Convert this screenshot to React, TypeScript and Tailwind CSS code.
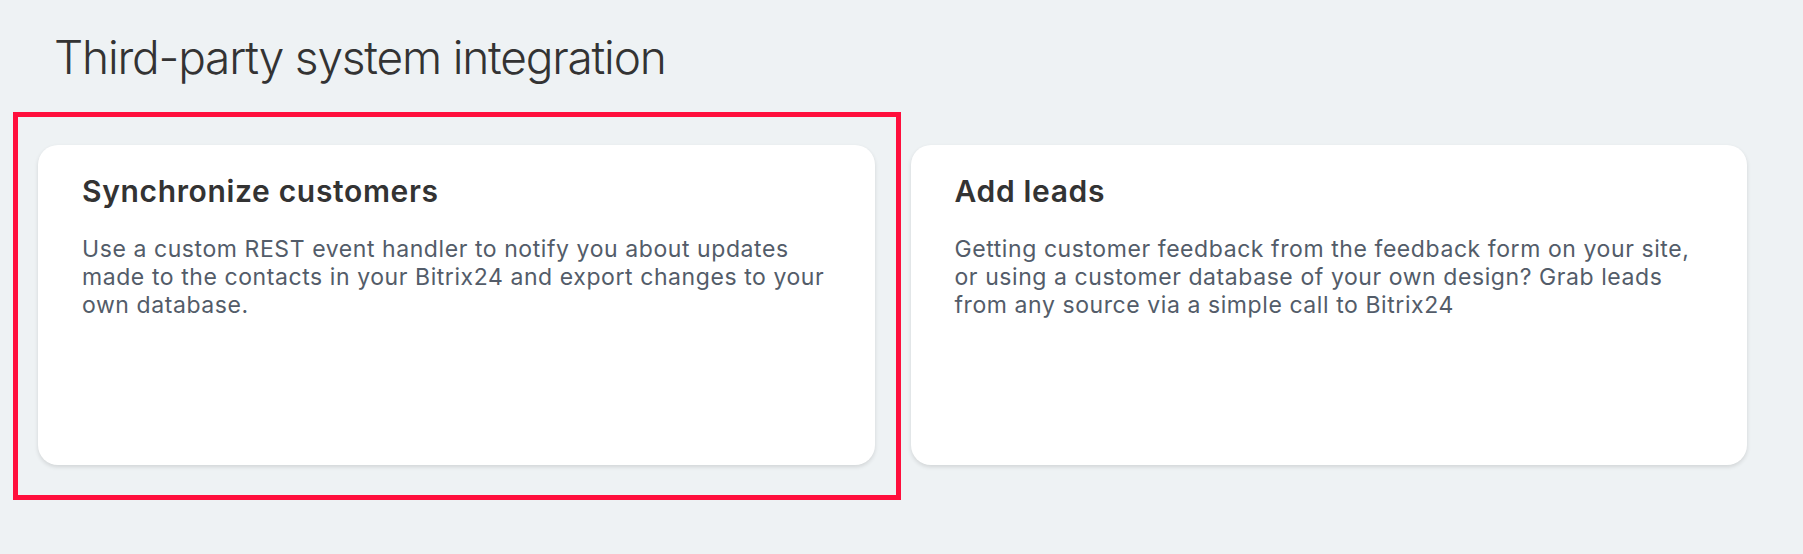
export default function App() {
  const cards = [
    {
      title: "Synchronize customers",
      text: "Use a custom REST event handler to notify you about updates made to the contacts in your Bitrix24 and export changes to your own database.",
      marked: true,
    },
    {
      title: "Add leads",
      text: "Getting customer feedback from the feedback form on your site, or using a customer database of your own design? Grab leads from any source via a simple call to Bitrix24",
      marked: false,
    },
  ]

  return (
    <div className="min-h-screen w-full bg-[#eef2f4] font-['Inter','Liberation_Sans',sans-serif]">
      <h1 className="pl-[54px] pt-[34px] text-[46px] font-light leading-none tracking-[-0.026em] text-[#333]">
        Third-party system integration
      </h1>

      <div className="mt-[65px] grid grid-cols-2 gap-[36px] pl-[38px] pr-[56px]">
        {cards.map((card) => (
          <div key={card.title} className="relative">
            {/* annotation frame */}
            {card.marked && (
              <div className="pointer-events-none absolute -left-[25px] -right-[26px] -top-[33px] -bottom-[35px] border-[5px] border-[#ff0f3c]"></div>
            )}
            <div className="h-[320px] rounded-[20px] bg-white px-[44px] pt-[31px] shadow-[0_2px_4px_rgba(0,0,0,0.12)]">
              <h2 className="text-[30px] font-semibold leading-none tracking-[0.022em] text-[#333]">{card.title}</h2>
              <p className="mt-[29px] text-[23px] leading-[28px] tracking-[0.025em] text-[#535c69]">{card.text}</p>
            </div>
          </div>
        ))}
      </div>
    </div>
  )
}
